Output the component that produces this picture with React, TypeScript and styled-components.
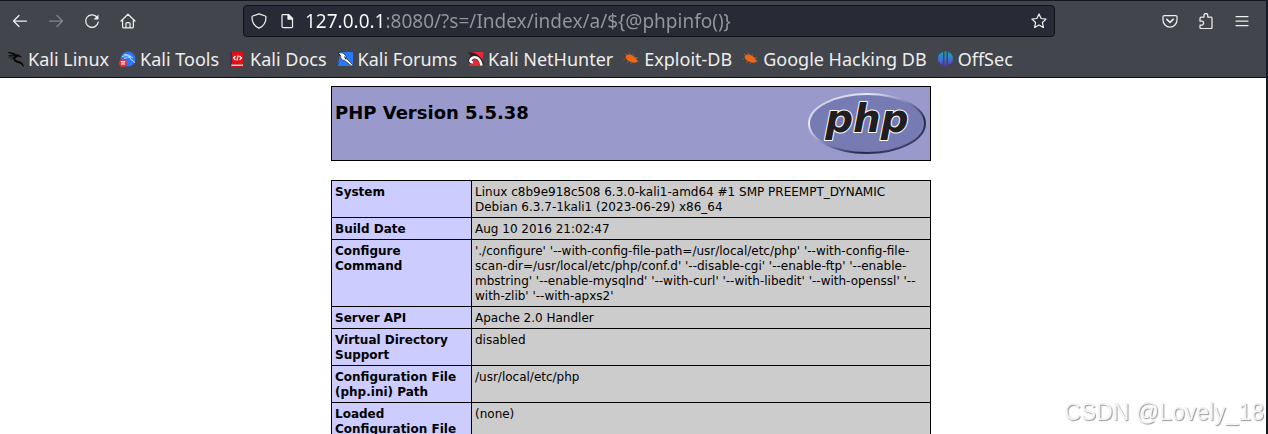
import React from "react";
import styled, { createGlobalStyle } from "styled-components";

const GlobalStyle = createGlobalStyle`
  * { box-sizing: border-box; }
  body { margin: 0; background: #fff; }
`;

const Window = styled.div`
  display: flex;
  flex-direction: column;
  height: 100vh;
  overflow: hidden;
  border-right: 2px solid #151a26;
`;

const Chrome = styled.header`
  flex: none;
  background: #43454d;
  border-top: 1px solid #15171e;
  border-bottom: 1px solid #0d0e12;
  color: #eeeeec;
  font-family: "Noto Sans", sans-serif;
`;

const Toolbar = styled.nav`
  display: flex;
  align-items: center;
  height: 40px;
  padding: 0 6px 0 2px;
`;

const ToolButton = styled.button`
  flex: none;
  display: flex;
  align-items: center;
  justify-content: center;
  width: 36px;
  height: 36px;
  padding: 0;
  border: 0;
  background: none;
  color: #eeeeec;
  &:disabled { color: #84858a; }
`;

const Spacer = styled.div`
  flex: 97 1 0;
`;

const AddressBar = styled.form`
  flex: 796 1 0;
  min-width: 0;
  display: flex;
  align-items: center;
  gap: 12px;
  height: 32px;
  padding: 0 7px;
  border: 1px solid #0f1116;
  border-radius: 4px;
  background: #282a36;
  color: #eeeeec;
`;

const AddressInput = styled.input`
  flex: 1;
  min-width: 0;
  height: 28px;
  margin-left: -2px;
  padding: 0;
  border: 0;
  outline: 0;
  font: 19px/28px "Noto Sans", sans-serif;
  color: #96979c;
  background: linear-gradient(90deg, #fbfbfb 80px, #96979c 80px);
  background-clip: text;
  -webkit-background-clip: text;
  -webkit-text-fill-color: transparent;
`;

const BarButton = styled.button`
  flex: none;
  display: flex;
  padding: 0;
  border: 0;
  background: none;
  color: inherit;
`;

const Bookmarks = styled.nav`
  display: flex;
  align-items: center;
  gap: 10px;
  height: 36px;
  padding: 0 8px 0 7px;
`;

const Bookmark = styled.a`
  display: flex;
  align-items: center;
  gap: 4px;
  color: #eeeeec;
  font-size: 18px;
  line-height: 24px;
  white-space: nowrap;
  text-decoration: none;
`;

const Page = styled.main`
  flex: 1;
  min-height: 0;
  overflow: hidden;
  display: flex;
  flex-direction: column;
  align-items: center;
  gap: 19px;
  padding: 8px 4px 0 0;
  background: #fff;
  color: #000;
  font-family: "DejaVu Sans", sans-serif;
`;

const Banner = styled.section`
  flex: none;
  display: flex;
  justify-content: space-between;
  align-items: flex-start;
  width: 600px;
  height: 75px;
  padding: 3px;
  border: 1px solid #000;
  background: #9999cc;
`;

const Title = styled.h1`
  margin: 12px 0 0;
  font-size: 18px;
  line-height: 22px;
`;

const InfoTable = styled.table`
  flex: none;
  width: 600px;
  border-collapse: collapse;
  table-layout: fixed;
  font-size: 12px;
  line-height: 15px;
`;

const Key = styled.th`
  width: 140px;
  padding: 4px 3px 2px;
  border: 1px solid #000;
  background: #ccccff;
  text-align: left;
  vertical-align: top;
`;

const Value = styled.td`
  padding: 4px 3px 2px;
  border: 1px solid #000;
  background: #cccccc;
  vertical-align: top;
`;

const Watermark = styled.div`
  position: fixed;
  right: 4px;
  bottom: 8px;
  font: 23px/28px "Liberation Sans", sans-serif;
  color: #f4f4f4;
  text-shadow: 1px 1px 1px #999;
`;

const Line = ({ children, size = 16 }: { children: React.ReactNode; size?: number }) => (
  <svg width={size} height={size} viewBox="0 0 16 16" fill="none" stroke="currentColor"
    strokeWidth="1.25" strokeLinecap="round" strokeLinejoin="round" aria-hidden="true">
    {children}
  </svg>
);

const BackIcon = () => <Line><path d="M14.5 8H1.5M7 2.5 1.5 8 7 13.5" /></Line>;
const ForwardIcon = () => <Line><path d="M1.5 8h13M9 2.5 14.500 8 9 13.500" /></Line>;
const ReloadIcon = () => (
  <Line>
    <path d="M14.200 9.200A6.300 6.300 0 1 1 12.600 3.800" />
    <path d="M14.500 1.500v5h-5z" fill="currentColor" stroke="none" />
  </Line>
);
const HomeIcon = () => (
  <Line>
    <path d="M1 8 8 1.200 15 8M2.600 7v6.800q0 1 1 1h8.800q1 0 1-1V7M6 14.500v-4q0-1 1-1h2q1 0 1 1v4" />
  </Line>
);
const ShieldIcon = () => (
  <Line><path d="M8 .8 14.300 3q.700.300.700 1C15 9.500 12 13.500 8 15.200 4 13.500 1 9.500 1 4q0-.700.700-1z" /></Line>
);
const PageIcon = () => (
  <Line>
    <path d="M3.500 1.500h6l4 4v8q0 1-1 1h-8q-1.500 0-1.500-1v-11q0-1 .5-1z" />
    <path d="M9 1.500V6h4.500z" fill="currentColor" />
  </Line>
);
const StarIcon = () => (
  <Line><path d="m8 .9 2.100 4.600 5 .600-3.700 3.400 1 5L8 12l-4.400 2.500 1-5L.9 6.100l5-.600z" /></Line>
);
const PocketIcon = () => (
  <Line>
    <path d="M2.300 2.500h11.400q1.300 0 1.300 1.300V7a7 7 0 0 1-14 0V3.800q0-1.300 1.300-1.300z" />
    <path d="M4.800 6.300 8 9.300l3.200-3" strokeWidth="1.600" />
  </Line>
);
const ExtensionIcon = () => (
  <Line>
    <path d="M2 5.500q0-1.500 1.500-1.500H6V2.400a1.900 1.900 0 0 1 3.800 0V4H13q1 0 1 1v9.500q0 1-1 1H3q-1 0-1-1V12h1.700a1.800 1.800 0 0 0 0-3.800H2z" />
  </Line>
);
const MenuIcon = () => <Line><path d="M2 3.500h12M2 8h12M2 12.500h12" /></Line>;

const Favicon = ({ children }: { children: React.ReactNode }) => (
  <svg width="17" height="17" viewBox="0 0 17 17" fill="none" aria-hidden="true">{children}</svg>
);

const KaliIcon = () => (
  <Favicon>
    <path d="M1 1.500q5-.5 8 2l3 .500 2.500 2-3.500-.500Q7.500 6 8 8.500q1 1.500 4.500 2 3.500 1 4 5-2-3.500-5-3.800Q7 11 6.500 8q0-2 1.500-3.300Q5 2.500 1 1.500z" fill="#050505" stroke="#050505" strokeWidth=".6" />
    <path d="M1.500 4.500 7 4.300M3.500 8.500 7.500 5.500M1.500 6.500 6 4.800" stroke="#111" />
  </Favicon>
);
const ToolsIcon = () => (
  <Favicon>
    <circle cx="9" cy="8" r="7.500" fill="#2777ff" />
    <path d="M3 5.500q5-2 8 0l3 1.500M5 7.500q4-2 6-1 .5 3 3.500 3.500 1 1 1 2M5 3.500q4-.5 7 2" stroke="#e6f0ff" strokeWidth=".8" />
    <circle cx="4" cy="12" r="4" fill="#e62e38" />
    <path d="M1.800 10.500h4.400M3 10.500V14M5 10.500V14" stroke="#fff" />
  </Favicon>
);
const DocsIcon = () => (
  <Favicon>
    <path d="M2 .5h12v13H2z" fill="#e01017" />
    <path d="M1 1.500 3 .5v15H2q-1 0-1-1z" fill="#303461" />
    <path d="M2 13.500h12v2.500H3z" fill="#f1c4bd" />
    <path d="M3 15.500h11" stroke="#bf1018" />
    <path d="M6.500 5 4.500 7l2 2M10.500 5l2 2-2 2M9.200 4.500l-1.400 5" stroke="#fff" strokeWidth="1.200" />
  </Favicon>
);
const ForumsIcon = () => (
  <Favicon>
    <path d="M3 1h13v14H1z" fill="#2878ff" />
    <path d="m1 1.500 5 .500 3 3v2l6.500 6.500.5 2.500L7.500 9.500 5 9z" fill="#fff" stroke="#13233f" strokeWidth=".7" />
    <path d="m1 1.500 3 4M7.500 5.500l1.500 3" stroke="#14213b" />
  </Favicon>
);
const HunterIcon = () => (
  <Favicon>
    <path d="M4 1h12.500l-1.500 14H2z" fill="#e52a35" />
    <path d="M.5 1.500q5-1 9 1.500l3 2.500L3 6q2-2-2.500-4.500z" fill="#24242a" />
    <path d="M6 11.500Q1.500 11 3.500 8 7 4.500 11 7q3 2 4 7" stroke="#24242a" strokeWidth="4" />
    <path d="M6 11.500Q2 11 4 8 7 5 10.500 7q3 2 4 7.500" stroke="#fff" strokeWidth="2.500" />
  </Favicon>
);
const BugIcon = () => (
  <Favicon>
    <path d="M3 4.500q4-2 7 .5 4 1.500 4.500 6-2.500 1-5 .5-4-.5-6-3.500Q2 6 3 4.500z" fill="#ee6713" />
    <path d="m2 8-1.500.5M4 4 2 3M7 4 6 1.500M10 5l.5-2.500M12 7l3-.5M14 9.500l2 1M6 10l-2 2M9 11.500 7.500 13" stroke="#b95c28" strokeWidth=".8" />
  </Favicon>
);
const OffSecIcon = () => (
  <Favicon>
    <defs>
      <linearGradient id="offsec" x1="0" y1="0" x2="0" y2="1">
        <stop offset="0" stopColor="#12a6ba" />
        <stop offset=".5" stopColor="#3a74d8" />
        <stop offset="1" stopColor="#6526c9" />
      </linearGradient>
    </defs>
    <path d="M6 1v13Q1 12.500 1 7.500T6 1zM11 1v13q5-1.500 5-6.500T11 1zM7.500.5h2v15.500l-2-.5z" fill="url(#offsec)" />
  </Favicon>
);

const PhpLogo = () => (
  <svg width="120" height="67" viewBox="0 0 120 67" role="img" aria-label="PHP logo">
    <defs>
      <linearGradient id="rim" x1="0" y1="0" x2="1" y2="1">
        <stop offset="0" stopColor="#aeb1dc" />
        <stop offset=".25" stopColor="#e9eaf8" />
        <stop offset=".5" stopColor="#7d80b6" />
        <stop offset=".72" stopColor="#25263f" />
        <stop offset="1" stopColor="#55578a" />
      </linearGradient>
    </defs>
    <ellipse cx="60" cy="33.500" rx="58" ry="29.500" fill="#777bb4" stroke="url(#rim)" strokeWidth="2" />
    <text x="60" y="42" textAnchor="middle" fontFamily="DejaVu Sans, sans-serif" fontSize="39"
      fontWeight="700" fontStyle="italic" fill="#221e1f" stroke="#fff" strokeWidth="2"
      strokeLinejoin="round" paintOrder="stroke">php</text>
  </svg>
);

const bookmarks = [
  { label: "Kali Linux", Icon: KaliIcon },
  { label: "Kali Tools", Icon: ToolsIcon },
  { label: "Kali Docs", Icon: DocsIcon },
  { label: "Kali Forums", Icon: ForumsIcon },
  { label: "Kali NetHunter", Icon: HunterIcon },
  { label: "Exploit-DB", Icon: BugIcon },
  { label: "Google Hacking DB", Icon: BugIcon },
  { label: "OffSec", Icon: OffSecIcon },
];

const info = [
  ["System", "Linux c8b9e918c508 6.3.0-kali1-amd64 #1 SMP PREEMPT_DYNAMIC Debian 6.3.7-1kali1 (2023-06-29) x86_64"],
  ["Build Date", "Aug 10 2016 21:02:47"],
  ["Configure Command", "'./configure' '--with-config-file-path=/usr/local/etc/php' '--with-config-file-scan-dir=/usr/local/etc/php/conf.d' '--disable-cgi' '--enable-ftp' '--enable-mbstring' '--enable-mysqlnd' '--with-curl' '--with-libedit' '--with-openssl' '--with-zlib' '--with-apxs2'"],
  ["Server API", "Apache 2.0 Handler"],
  ["Virtual Directory Support", "disabled"],
  ["Configuration File (php.ini) Path", "/usr/local/etc/php"],
  ["Loaded Configuration File", "(none)"],
];

export default function App() {
  return (
    <Window>
      <GlobalStyle />
      <Chrome>
        <Toolbar>
          <ToolButton aria-label="Back"><BackIcon /></ToolButton>
          <ToolButton aria-label="Forward" disabled><ForwardIcon /></ToolButton>
          <ToolButton aria-label="Reload"><ReloadIcon /></ToolButton>
          <ToolButton aria-label="Home"><HomeIcon /></ToolButton>
          <Spacer />
          <AddressBar onSubmit={(e) => e.preventDefault()}>
            <BarButton type="button" aria-label="Tracking protection"><ShieldIcon /></BarButton>
            <BarButton type="button" aria-label="Site information"><PageIcon /></BarButton>
            <AddressInput aria-label="Address" spellCheck={false}
              defaultValue="127.0.0.1:8080/?s=/Index/index/a/${@phpinfo()}" />
            <BarButton type="button" aria-label="Bookmark this page"><StarIcon /></BarButton>
          </AddressBar>
          <Spacer />
          <ToolButton aria-label="Save to Pocket"><PocketIcon /></ToolButton>
          <ToolButton aria-label="Extensions"><ExtensionIcon /></ToolButton>
          <ToolButton aria-label="Menu"><MenuIcon /></ToolButton>
        </Toolbar>
        <Bookmarks>
          {bookmarks.map(({ label, Icon }) => (
            <Bookmark href="#" key={label}><Icon />{label}</Bookmark>
          ))}
        </Bookmarks>
      </Chrome>
      <Page>
        <Banner>
          <Title>PHP Version 5.5.38</Title>
          <PhpLogo />
        </Banner>
        <InfoTable>
          <tbody>
            {info.map(([key, value]) => (
              <tr key={key}>
                <Key scope="row">{key}</Key>
                <Value>{value}</Value>
              </tr>
            ))}
          </tbody>
        </InfoTable>
      </Page>
      <Watermark>CSDN @Lovely_18</Watermark>
    </Window>
  );
}
